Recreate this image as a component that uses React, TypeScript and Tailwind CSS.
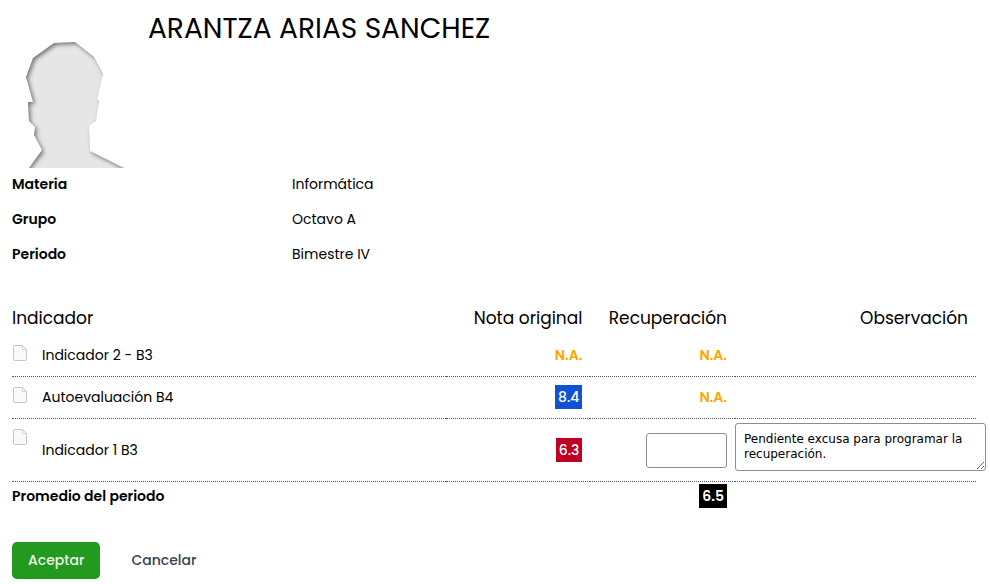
import React, { useState } from 'react';

interface Indicator {
  id: number;
  name: string;
  grade: string | null;
  editable: boolean;
  observation?: string;
}

const details = [
  { label: 'Materia', value: 'Informática' },
  { label: 'Grupo', value: 'Octavo A' },
  { label: 'Periodo', value: 'Bimestre IV' },
];

const indicators: Indicator[] = [
  { id: 1, name: 'Indicador 2 - B3', grade: null, editable: false },
  { id: 2, name: 'Autoevaluación B4', grade: '8.4', editable: false },
  {
    id: 3,
    name: 'Indicador 1 B3',
    grade: '6.3',
    editable: true,
    observation: 'Pendiente excusa para programar la recuperación.',
  },
];

const PASSING_GRADE = 7;

const StudentPhoto: React.FC = () => (
  <svg viewBox="0 0 124 128" className="w-[124px] h-32 shrink-0" role="img" aria-label="Foto">
    <defs>
      <clipPath id="head">
        <path d="M42 3 63 2 82 17 91 34 85 59 87 61 84 81 77 86 78 111 112 128H17L30 110 22 95 23 87 17 81 16 62H21L14 37 21 18Z" />
      </clipPath>
      <filter id="soft" x="-20%" y="-20%" width="140%" height="140%">
        <feGaussianBlur stdDeviation="2" />
      </filter>
    </defs>
    <g clipPath="url(#head)">
      <rect width="124" height="128" fill="#e6e6e6" />
      {/* Inner shadow falling from the top left */}
      <path
        d="M-20-20H144V150H-20ZM43 4 64 3 83 18 92 35 86 60 88 62 85 82 78 87 79 112 113 129V140H17V129L31 111 23 96 24 88 18 82 17 63H22L15 38 22 19Z"
        transform="translate(1 1)"
        fill="#777"
        fillRule="evenodd"
        filter="url(#soft)"
      />
    </g>
  </svg>
);

const PageIcon: React.FC = () => (
  <svg viewBox="0 0 16 16" className="w-4 h-4" aria-hidden="true">
    <path d="M1.5 1.5Q1.5.5 2.5.5H10.5L14.5 4.5V14.5Q14.5 15.5 13.5 15.5H2.5Q1.5 15.5 1.5 14.5Z" fill="#f9f9f9" stroke="#c6c6c6" />
    <path d="M10.5 1V4.5H14" fill="#fff" stroke="#d2d2d2" />
  </svg>
);

const Grade: React.FC<{ value: string | null }> = ({ value }) => {
  if (value === null) return <span className="font-semibold text-[#ffa500]">N.A.</span>;

  const color = Number(value) >= PASSING_GRADE ? 'bg-[#0f52d6]' : 'bg-[#bd0023]';
  return <span className={`inline-block px-[3px] leading-6 font-medium text-white ${color}`}>{value}</span>;
};

const App: React.FC = () => {
  const [recovery, setRecovery] = useState('');
  const [observation, setObservation] = useState(indicators[2].observation ?? '');

  return (
    <form
      className="bg-white pl-3 pr-[14px] pb-1 text-sm text-black font-[Poppins,Inter,sans-serif]"
      onSubmit={(e) => e.preventDefault()}
    >
      {/* Student */}
      <header className="flex gap-3 pt-2">
        <div className="pt-8">
          <StudentPhoto />
        </div>
        <h1 className="text-[28px] leading-[42px]">ARANTZA ARIAS SANCHEZ</h1>
      </header>

      <dl className="-mt-px mb-[29px]">
        {details.map((item) => (
          <div key={item.label} className="flex leading-[35px]">
            <dt className="w-[280px] font-semibold">{item.label}</dt>
            <dd>{item.value}</dd>
          </div>
        ))}
      </dl>

      {/* Grades */}
      <table className="w-full table-fixed border-separate border-spacing-0">
        <thead>
          <tr className="h-[34px] text-[17px]">
            <th className="w-[45%] text-left font-normal">Indicador</th>
            <th className="w-[15%] pr-2 text-right font-normal">Nota original</th>
            <th className="w-[15%] pr-2 text-right font-normal">Recuperación</th>
            <th className="w-[25%] pr-2 text-right font-normal">Observación</th>
          </tr>
        </thead>
        <tbody className="[&_td]:border-b [&_td]:border-dotted [&_td]:border-[#555]">
          {indicators.map((item) => (
            <tr key={item.id} className={item.editable ? 'h-[63px]' : 'h-[42px] [&>td]:pb-[2px]'}>
              <td className="h-px">
                <div className="flex h-full gap-[14px]">
                  <span className="pt-[10px]">
                    <PageIcon />
                  </span>
                  <span className="self-center">{item.name}</span>
                </div>
              </td>
              <td className="pr-2 text-right">
                <Grade value={item.grade} />
              </td>
              <td className="pr-2 text-right">
                {item.editable ? (
                  <input
                    type="text"
                    aria-label={`Recuperación ${item.name}`}
                    value={recovery}
                    onChange={(e) => setRecovery(e.target.value)}
                    className="inline-block w-[81px] h-[35px] px-2 align-middle text-right border border-[#8f8f8f] rounded-[3px]"
                  />
                ) : (
                  <Grade value={null} />
                )}
              </td>
              <td className="align-top">
                {item.editable && (
                  <textarea
                    aria-label={`Observación ${item.name}`}
                    value={observation}
                    onChange={(e) => setObservation(e.target.value)}
                    className="block mt-1 w-[calc(100%+10px)] h-12 px-2 py-2 resize border border-[#8f8f8f] rounded-[3px] text-[12px] leading-[15px] font-['DejaVu_Sans',sans-serif]"
                  />
                )}
              </td>
            </tr>
          ))}
        </tbody>
        <tfoot>
          <tr className="h-7 font-semibold">
            <th scope="row" className="text-left font-semibold">Promedio del periodo</th>
            <td />
            <td className="pr-2 text-right">
              <span className="inline-block px-[3px] leading-6 bg-black text-white">6.5</span>
            </td>
            <td />
          </tr>
        </tfoot>
      </table>

      {/* Actions */}
      <div className="flex mt-8">
        <button type="submit" className="h-[37px] px-4 pb-px rounded-[5px] bg-[#23991f] font-medium text-[#edf5ed]">
          Aceptar
        </button>
        <button type="button" className="h-[37px] ml-[15px] px-4 pb-px font-medium text-[#374151]">
          Cancelar
        </button>
      </div>
    </form>
  );
};

export default App;
